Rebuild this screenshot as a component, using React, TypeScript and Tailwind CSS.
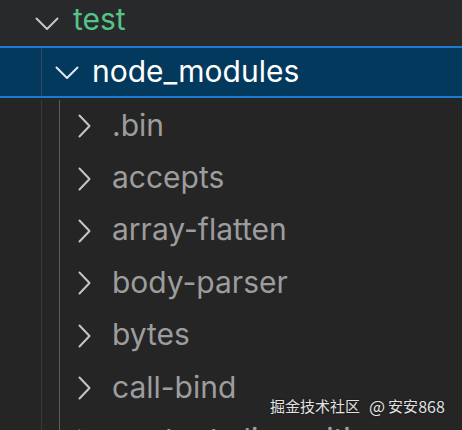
import React from "react";

const ChevronDown = ({ color = "#c5c5c5" }: { color?: string }) => (
  <svg width="24" height="14" viewBox="0 0 24 14" fill="none">
    <path d="M1.5 1.5 L12 12 L22.5 1.5" stroke={color} strokeWidth="2" strokeLinecap="round" strokeLinejoin="round" />
  </svg>
);

const ChevronRight = () => (
  <svg width="13" height="24" viewBox="0 0 13 24" fill="none">
    <path d="M1.5 1.5 L11.5 12 L1.5 22.5" stroke="#c5c5c5" strokeWidth="2" strokeLinecap="round" strokeLinejoin="round" />
  </svg>
);

const children = [".bin", "accepts", "array-flatten", "body-parser", "bytes", "call-bind", "content-disposition"];

export default function App() {
  return (
    <div
      className="relative w-[462px] h-[430px] overflow-hidden bg-[#252526]"
      style={{ fontFamily: "Inter, 'Noto Sans', 'Noto Sans CJK SC', sans-serif" }}
    >
      {/* test row */}
      <div className="flex items-center h-[46px] bg-[#28292a]">
        <div className="w-[35px] shrink-0" />
        <div className="w-[24px] shrink-0 flex items-center mt-[2px]">
          <ChevronDown />
        </div>
        <div className="w-[14px] shrink-0" />
        <span className="text-[30px] leading-none text-[#54c489] -mt-[8px]">test</span>
      </div>

      {/* selected node_modules row */}
      <div className="flex items-center h-[52px] bg-[#04395e] border-y-2 border-[#1a7ad4]">
        <div className="w-[41px] shrink-0" />
        <div className="w-[1px] self-stretch shrink-0 bg-[#2b4a63]" />
        <div className="w-[13px] shrink-0" />
        <div className="w-[24px] shrink-0 flex items-center mt-[2px]">
          <ChevronDown color="#e0e6ec" />
        </div>
        <div className="w-[13px] shrink-0" />
        <span className="text-[30px] leading-none text-white -mt-[3px]">node_modules</span>
      </div>

      {/* children */}
      <div className="pt-[2px]">
        {children.map((name) => (
          <div key={name} className="flex items-center h-[52.4px]">
            <div className="w-[41px] shrink-0" />
            <div className="w-[1px] self-stretch shrink-0 bg-[#3a3a3a]" />
            <div className="w-[17px] shrink-0" />
            <div className="w-[1px] self-stretch shrink-0 bg-[#5c5c5c]" />
            <div className="w-[18px] shrink-0" />
            <div className="w-[13px] shrink-0 flex items-center">
              <ChevronRight />
            </div>
            <div className="w-[21px] shrink-0" />
            <span className="text-[30px] leading-none text-[#9d9d9d] -mt-[3px]">{name}</span>
          </div>
        ))}
      </div>

      {/* watermark */}
      <div
        className="absolute left-[270px] top-[397px] flex items-center text-[15px] leading-none text-[#e2e2e2] whitespace-nowrap"
        style={{ fontFamily: "'Noto Sans CJK SC', 'Noto Sans', sans-serif", textShadow: "0 0 2px rgba(0,0,0,0.6)" }}
      >
        <span>掘金技术社区</span>
        <span className="ml-[9px] text-[17px]">@</span>
        <span className="ml-[3px]">安安</span>
        <span className="text-[16px]">868</span>
      </div>
    </div>
  );
}
